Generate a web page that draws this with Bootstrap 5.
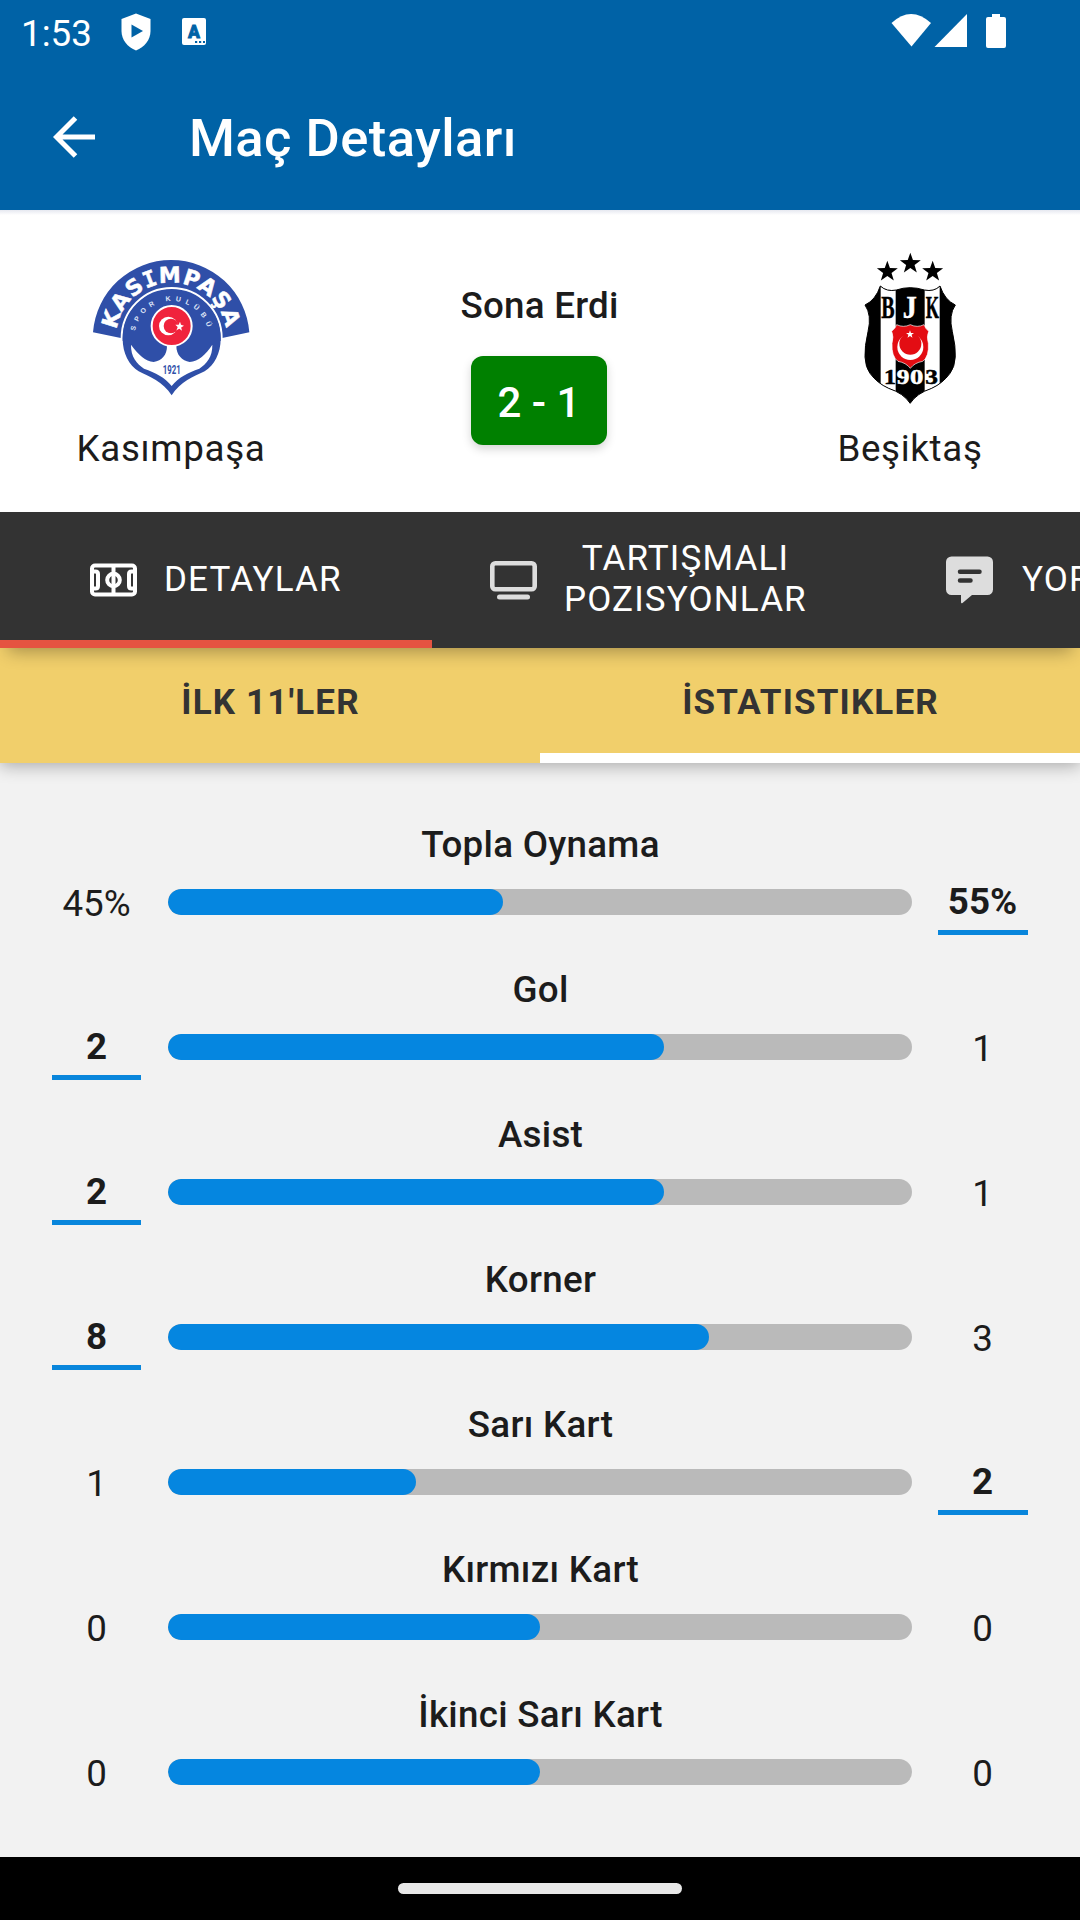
<!DOCTYPE html>
<html lang="tr">
<head>
  <meta charset="UTF-8" />
  <meta name="viewport" content="width=device-width, initial-scale=1.0">
  <title>Maç Detayları</title>
  <link href="https://cdn.jsdelivr.net/npm/bootstrap@5.3.2/dist/css/bootstrap.min.css" rel="stylesheet">
  <style>
    body { font-family: Roboto, "Noto Sans", sans-serif; font-size: 36.75px; line-height: 43px; color: #1c1c1c; background: #f2f2f2; height: 1920px; overflow: hidden; }
    svg { display: block; flex: none; }
    .fw-medium5 { font-weight: 500; }

    .top-area { background: #0062a6; color: #fff; height: 210px; }
    .status-bar { height: 64px; padding: 0 73px 0 21px; }
    .clock { width: 100px; padding-top: 12px; }
    .app-bar { height: 146px; padding-left: 53px; }
    .app-title { font-size: 52.5px; line-height: 62px; margin: 0 0 0 93px; padding-top: 2px; letter-spacing: .45px; }

    .match-head { background: linear-gradient(#e6e8f0, #fff 5px); height: 302px; }
    .team { width: 341px; padding-top: 42px; letter-spacing: .65px; }
    .team.home { width: 340px; padding-left: 2px; }
    .team.away { padding-left: 1px; }
    .team-logo { height: 152px; margin-bottom: 23px; }
    .match-mid { padding-top: 74px; letter-spacing: .25px; }
    .score { width: 136px; height: 89px; margin: 29px 1px 0 0; padding-top: 3px; border-radius: 12px; background: #008000; color: #fff; font-size: 42px; letter-spacing: 0; box-shadow: 0 4px 10px rgba(0,0,0,.17); }

    .main-tabs { height: 136px; background: #333; color: #fff; font-size: 35px; line-height: 41px; letter-spacing: 1.15px; box-shadow: 0 12px 16px -8px rgba(0,0,0,.3); z-index: 2; }
    .main-tab { flex: 0 0 432px; gap: 19px; border-bottom: 8px solid transparent; padding: 8px 0 0 50px; }
    .main-tab span { padding-bottom: 1px; }
    .main-tab span.two-lines { padding-bottom: 3px; }
    .main-tab.active { border-color: #e55341; padding-left: 82px; }
    .main-tab.cut { flex-basis: 216px; gap: 21px; padding-left: 74px; }
    .sub-tabs { height: 115px; background: #f1cf6b; color: #333; font-size: 35px; line-height: 41px; letter-spacing: 1.15px; font-weight: 700; box-shadow: 0 3px 16px rgba(0,0,0,.3); z-index: 1; }
    .sub-tab { border-bottom: 10px solid transparent; padding: 4px 0 0 1px; }
    .sub-tab.active { border-color: #fff; }

    .stats { height: 1094px; padding: 60px 52px 0; }
    .stat { height: 145px; }
    .stat-name { letter-spacing: .28px; padding-left: 1px; }
    .stat-line { height: 49px; margin-top: 15px; }
    .stat-val { width: 89px; height: 54px; padding-top: 1px; }
    .stat-val:last-child { width: 90px; padding-right: 1px; }
    .stat-val.best { font-weight: 700; border-bottom: 5px solid #0986dc; padding-top: 0; }
    .stat-val.best span { display: block; margin-top: -1px; }
    .stat-bar { height: 26px; border-radius: 13px; background: #bababa; margin: 8px 26px 0 27px; }
    .stat-bar .progress-bar { background: #0586e0; border-radius: 13px; }

    .nav-strip { height: 63px; background: #000; }
    .nav-pill { width: 284px; height: 11px; border-radius: 6px; background: #e8e8e8; }
  </style>
</head>
<body>

<div class="top-area">
  <div class="status-bar d-flex align-items-start">
    <div class="clock">1:53</div>
    <svg width="30" height="64" viewBox="0 0 30 64">
      <path d="M15 13.500L29.500 19V31C29.500 40 23.500 47 15 50.500C6.500 47 .5 40 .5 31V19Z" fill="#fff"/>
      <path d="M10.500 24.500V37.500L22 31Z" fill="#0062a6"/>
    </svg>
    <svg class="ms-4" width="40" height="64" viewBox="-7 0 40 64">
      <rect x="0" y="18" width="24" height="27" rx="2" fill="#fff"/>
      <text x="12" y="38" text-anchor="middle" font-size="17.500" font-weight="900" fill="#0062a6" stroke="#0062a6" stroke-width=".8">A</text>
      <path d="M13 42h2.200M17 42h2.200M21 42h2" stroke="#0062a6" stroke-width="2.200"/>
    </svg>
    <svg class="ms-auto" width="116" height="64" viewBox="0 0 116 64" fill="#fff">
      <path d="M.5 23Q20 5 40 23L20.500 46.500Z"/>
      <path d="M76 14V47H43.500Z"/>
      <path d="M101 14h8v3h4a2 2 0 0 1 2 2v27a2 2 0 0 1-2 2h-16a2 2 0 0 1-2-2v-27a2 2 0 0 1 2-2h4z"/>
    </svg>
  </div>
  <div class="app-bar d-flex align-items-center">
    <svg width="43" height="42" viewBox="0 0 43 42" fill="none" stroke="#fff" stroke-width="5">
      <path d="M42 21H4M22.500 2L3.500 21L22.500 40"/>
    </svg>
    <h1 class="app-title fw-medium5">Maç Detayları</h1>
  </div>
</div>

<div class="match-head d-flex justify-content-between text-center">
  <div class="team home">
    <div class="team-logo d-flex align-items-center justify-content-center">
      <svg width="160" height="140" viewBox="62 54 480 420">
        <defs>
          <path id="arcName" d="M138.600 271A166 166 0 0 1 467.400 271"/>
          <path id="arcClub" d="M194 273A112 112 0 0 1 412 266"/>
        </defs>
        <path d="M68 277A235.200 235.200 0 0 1 537 277L452 295H155Z" fill="#2f4fa8"/>
        <path d="M154 303V294A150 150 0 0 1 454 294V303" fill="#2f4fa8" stroke="#fff" stroke-width="6"/>
        <path d="M157 296A147 147 0 0 1 451 296C451 340 432 375 403 394C370 410 330 425 304 466C278 425 236 410 205 394C176 375 157 340 157 296Z" fill="#2f4fa8"/>
        <path d="M182 314C205 345 225 363 250 366C275 362 290 345 290 318H318C318 345 335 362 358 366C385 363 405 345 426 314C427 350 408 372 387 386C352 398 325 412 304 438C283 412 256 398 221 386C200 372 181 350 182 314Z" fill="#fff"/>
        <circle cx="304" cy="258" r="60" fill="#f0233c" stroke="#fff" stroke-width="6"/>
        <circle cx="294" cy="258" r="28" fill="#fff"/>
        <circle cx="302" cy="258" r="22" fill="#f0233c"/>
        <path d="M341 257L332.500 262.500L335 272L327 266L318.500 270.500L322 261L315 254.500L325 254.500L329 245L332 254.500Z" fill="#fff"/>
        <text fill="#fff" stroke="#fff" stroke-width="1.500" font-family="DejaVu Sans, sans-serif" font-weight="700" font-size="66" letter-spacing="0"><textPath href="#arcName" startOffset="2" textLength="466">KAS<tspan font-family="DejaVu Sans Mono">I</tspan>MPAŞA</textPath></text>
        <text fill="#dfe5f7" font-family="Liberation Sans, sans-serif" font-weight="700" font-size="21"><textPath href="#arcClub" textLength="296">SPOR KULÜBÜ</textPath></text>
        <text x="277" y="402" fill="#2f4fa8" font-family="Roboto, sans-serif" font-weight="700" font-size="37" textLength="54" lengthAdjust="spacingAndGlyphs" letter-spacing="0">1921</text>
      </svg>
    </div>
    <span>Kasımpaşa</span>
  </div>

  <div class="match-mid d-flex flex-column align-items-center fw-medium5">
    <div>Sona Erdi</div>
    <div class="score d-flex align-items-center justify-content-center">2 - 1</div>
  </div>

  <div class="team away">
    <div class="team-logo d-flex align-items-center justify-content-center">
      <svg width="96" height="152" viewBox="126 36 288 456" letter-spacing="0">
        <defs>
          <path id="star" d="M0-33L7.800-10.700L31.400-10.200L12.600 4.100L19.400 26.700L0 13.200L-19.400 26.700L-12.600 4.100L-31.400-10.200L-7.800-10.700Z"/>
          <path id="shield" d="M181 138Q200 156 229 150Q270 136 313 150Q342 156 360 138Q374 180 406 195Q385 225 397 275Q418 365 390 400Q368 430 335 445Q290 460 270.500 490Q251 460 206 445Q172 430 150 400Q123 365 144 275Q156 225 135 195Q167 180 181 138Z"/>
          <clipPath id="shieldClip"><use href="#shield"/></clipPath>
        </defs>
        <use href="#star" x="202" y="95"/>
        <use href="#star" x="271" y="71"/>
        <use href="#star" x="338" y="95"/>
        <use href="#shield"/>
        <g clip-path="url(#shieldClip)" fill="#fff">
          <rect x="182" y="130" width="45" height="340"/>
          <rect x="314" y="130" width="45" height="340"/>
        </g>
        <use href="#shield" fill="none" stroke="#000" stroke-width="3"/>
        <g font-family="Liberation Serif, serif" font-weight="700" font-size="94" stroke-width="1.500">
          <text x="184" y="234" textLength="40" lengthAdjust="spacingAndGlyphs" stroke="#000">B</text>
          <text x="248" y="234" textLength="42" lengthAdjust="spacingAndGlyphs" fill="#fff" stroke="#fff">J</text>
          <text x="317" y="234" textLength="40" lengthAdjust="spacingAndGlyphs" stroke="#000">K</text>
        </g>
        <g font-family="Liberation Serif, serif" font-weight="700" font-size="62" stroke-width="1.500">
          <text x="192" y="431" textLength="36" lengthAdjust="spacingAndGlyphs" stroke="#000">1</text>
          <text x="230" y="431" textLength="38" lengthAdjust="spacingAndGlyphs" fill="#fff" stroke="#fff">9</text>
          <text x="270" y="431" textLength="40" lengthAdjust="spacingAndGlyphs" fill="#fff" stroke="#fff">0</text>
          <text x="316" y="431" textLength="38" lengthAdjust="spacingAndGlyphs" stroke="#000">3</text>
        </g>
        <path d="M230 254Q250 264 271 254Q292 264 312 254Q316 266 326 274Q319 290 325 310Q328 350 308 364Q284 368 271 385Q258 368 234 364Q214 350 216 310Q222 290 215 274Q226 266 230 254Z" fill="#e30d13" stroke="#fff" stroke-width="2"/>
        <circle cx="271" cy="321" r="39" fill="#fff"/>
        <circle cx="271" cy="311" r="33" fill="#e30d13"/>
        <use href="#star" fill="#fff" transform="translate(270 283) scale(.38)"/>
      </svg>
    </div>
    <span>Beşiktaş</span>
  </div>
</div>

<div class="main-tabs d-flex position-relative">
  <div class="main-tab active d-flex align-items-center">
    <svg width="63" height="63" viewBox="0 0 63 63" fill="none" stroke="#fff" stroke-width="4">
      <rect x="10" y="16.500" width="43" height="29" rx="3"/>
      <path d="M31.500 16V46"/>
      <circle cx="31.500" cy="31" r="6.300"/>
      <path d="M10 22.500H13.500Q16 22.500 16 25V37Q16 39.500 13.500 39.500H10M53 22.500H49.500Q47 22.500 47 25V37Q47 39.500 49.500 39.500H53"/>
    </svg>
    <span>DETAYLAR</span>
  </div>
  <div class="main-tab d-flex align-items-center text-center">
    <svg width="63" height="63" viewBox="0 0 63 63">
      <rect x="10.300" y="14.300" width="42.400" height="26" rx="3" fill="none" stroke="#ddd" stroke-width="4.600"/>
      <rect x="15" y="45.500" width="33" height="5" rx="2.500" fill="#ddd"/>
    </svg>
    <span class="two-lines">TARTIŞMALI<br>POZISYONLAR</span>
  </div>
  <div class="main-tab cut d-flex align-items-center overflow-hidden">
    <svg width="63" height="63" viewBox="0 0 63 63">
      <path d="M13.500 7.500H49.500A5.500 5.500 0 0 1 55 13V40.500A5.500 5.500 0 0 1 49.500 46H34L24.500 54Q23 55 23 53V46H13.500A5.500 5.500 0 0 1 8 40.500V13A5.500 5.500 0 0 1 13.500 7.500Z" fill="#ddd"/>
      <path d="M22 22.800H41.500M22 31.500H32.500" stroke="#333" stroke-width="4.500" stroke-linecap="round"/>
    </svg>
    <span>YORUMLAR</span>
  </div>
</div>

<div class="sub-tabs d-flex position-relative">
  <div class="sub-tab w-50 d-flex align-items-center justify-content-center">İLK 11'LER</div>
  <div class="sub-tab active w-50 d-flex align-items-center justify-content-center">İSTATISTIKLER</div>
</div>

<div class="stats" id="stats"></div>

<div class="nav-strip d-flex align-items-center justify-content-center">
  <div class="nav-pill"></div>
</div>

<script src="https://cdn.jsdelivr.net/npm/bootstrap@5.3.2/dist/js/bootstrap.bundle.min.js"></script>
<script>
const stats = [
  { name: "Topla Oynama", home: 45, away: 55, unit: "%" },
  { name: "Gol", home: 2, away: 1 },
  { name: "Asist", home: 2, away: 1 },
  { name: "Korner", home: 8, away: 3 },
  { name: "Sarı Kart", home: 1, away: 2 },
  { name: "Kırmızı Kart", home: 0, away: 0 },
  { name: "İkinci Sarı Kart", home: 0, away: 0 }
];

function value(v, other, unit) {
  return `<div class="stat-val ${v > other ? "best" : ""}"><span>${v}${unit || ""}</span></div>`;
}

document.getElementById("stats").innerHTML = stats.map(s => {
  const total = s.home + s.away;
  // no events on either side: split the bar in half
  const share = total ? s.home / total * 100 : 50;
  return `<div class="stat text-center">
    <div class="stat-name fw-medium5">${s.name}</div>
    <div class="stat-line d-flex align-items-start">
      ${value(s.home, s.away, s.unit)}
      <div class="stat-bar progress flex-grow-1"><div class="progress-bar" style="width:${share}%"></div></div>
      ${value(s.away, s.home, s.unit)}
    </div>
  </div>`;
}).join("");
</script>
</body>
</html>
